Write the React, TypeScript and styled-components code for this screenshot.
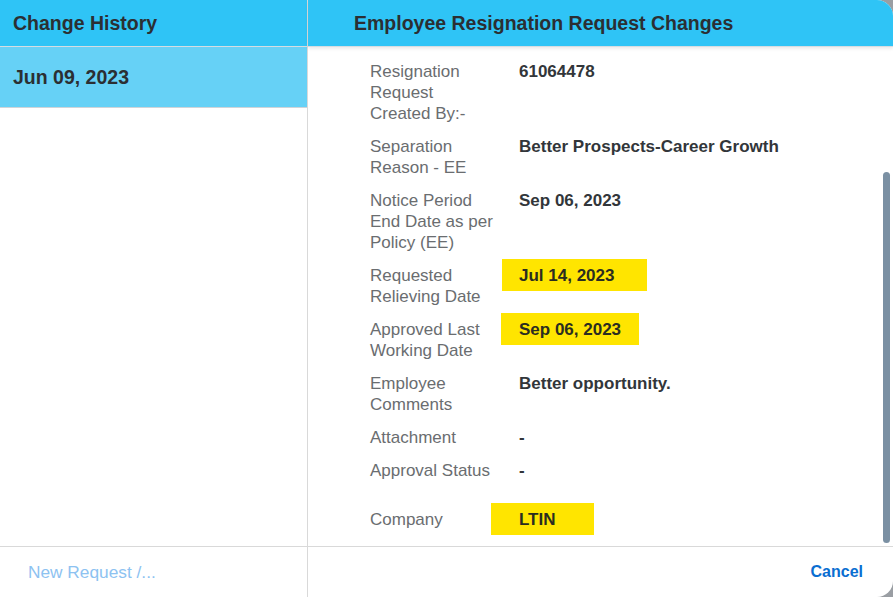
import React from 'react';
import styled, { createGlobalStyle } from 'styled-components';

const GlobalStyle = createGlobalStyle`
    html, body {
        margin: 0;
        padding: 0;
        background: #9a9ea3;
    }
    * {
        box-sizing: border-box;
    }
`;

const Dialog = styled.div`
    display: flex;
    width: 893px;
    height: 597px;
    background: #ffffff;
    border-radius: 0 16px 16px 0;
    overflow: hidden;
    font-family: 'Liberation Sans', Arial, sans-serif;
    color: #32363a;
`;

const LeftPane = styled.div`
    display: flex;
    flex-direction: column;
    width: 308px;
    border-right: 1px solid #d9d9d9;
`;

const RightPane = styled.div`
    display: flex;
    flex-direction: column;
    flex: 1;
    min-width: 0;
`;

const Header = styled.div<{ $pad: number; $shadow?: boolean }>`
    display: flex;
    align-items: center;
    height: 47px;
    padding-left: ${(p) => p.$pad}px;
    background: #2fc4f6;
    border-bottom: 1px solid #d6dde2;
    box-shadow: ${(p) => (p.$shadow ? '0 2px 3px rgba(0, 0, 0, 0.08)' : 'none')};
    position: relative;
    z-index: 1;
`;

const HeaderTitle = styled.h1<{ $size: number }>`
    margin: 0;
    font-size: ${(p) => p.$size}px;
    font-weight: 700;
    color: #2b2f33;
`;

const HistoryList = styled.div`
    flex: 1;
`;

const HistoryItem = styled.div<{ $selected?: boolean }>`
    display: flex;
    align-items: center;
    height: 61px;
    padding: 0 0 0 13px;
    background: ${(p) => (p.$selected ? '#66d1f6' : '#ffffff')};
    border-bottom: 1px solid #cfd4d8;
    font-size: 19.5px;
    font-weight: 700;
    color: #2b2f33;
`;

const Footer = styled.div<{ $align: 'start' | 'end' }>`
    display: flex;
    align-items: center;
    justify-content: ${(p) => (p.$align === 'end' ? 'flex-end' : 'flex-start')};
    height: 51px;
    padding: 0 30px 0 28px;
    border-top: 1px solid #d9d9d9;
`;

const FooterButton = styled.button<{ $disabled?: boolean }>`
    border: none;
    background: none;
    padding: 0;
    font-family: inherit;
    font-size: ${(p) => (p.$disabled ? 17.3 : 16)}px;
    font-weight: ${(p) => (p.$disabled ? 400 : 700)};
    color: ${(p) => (p.$disabled ? '#8dc2f1' : '#0a6ed1')};
    cursor: ${(p) => (p.$disabled ? 'default' : 'pointer')};
`;

const Body = styled.div`
    display: flex;
    flex: 1;
    min-height: 0;
    overflow: hidden;
`;

const Content = styled.div`
    display: flex;
    flex-direction: column;
    gap: 12px;
    flex: 1;
    padding: 14px 0 0 62px;
`;

const Row = styled.div<{ $extraTop?: number }>`
    display: grid;
    grid-template-columns: 126px 1fr;
    column-gap: 23px;
    margin-top: ${(p) => p.$extraTop ?? 0}px;
    font-size: 17px;
    line-height: 21px;
`;

const Label = styled.div`
    color: #6a6d70;
`;

const Value = styled.div`
    font-weight: 700;
    color: #32363a;
`;

const Highlight = styled.span<{ $shift: number; $width: number }>`
    display: inline-block;
    width: ${(p) => p.$width}px;
    margin: -6px 0 -5px -${(p) => p.$shift}px;
    padding: 6px 0 5px ${(p) => p.$shift}px;
    background: #ffe500;
    color: #2b2d20;
`;

const ScrollTrack = styled.div`
    display: flex;
    width: 14px;
    padding: 125px 3px 3px 4px;
`;

const ScrollThumb = styled.div`
    flex: 1;
    border-radius: 5px;
    background: #7b90a3;
`;

type Field = {
    label: string;
    value: string;
    highlight?: { shift: number; width: number };
    extraTop?: number;
};

const fields: Field[] = [
    { label: 'Resignation Request Created By:-', value: '61064478' },
    { label: 'Separation Reason - EE', value: 'Better Prospects-Career Growth' },
    { label: 'Notice Period End Date as per Policy (EE)', value: 'Sep 06, 2023' },
    { label: 'Requested Relieving Date', value: 'Jul 14, 2023', highlight: { shift: 17, width: 145 } },
    { label: 'Approved Last Working Date', value: 'Sep 06, 2023', highlight: { shift: 18, width: 138 } },
    { label: 'Employee Comments', value: 'Better opportunity.' },
    { label: 'Attachment', value: '-' },
    { label: 'Approval Status', value: '-' },
    { label: 'Company', value: 'LTIN', highlight: { shift: 28, width: 103 }, extraTop: 16 },
];

const App: React.FC = () => {
    return (
        <>
            <GlobalStyle />
            <Dialog>
                <LeftPane>
                    <Header $pad={13}>
                        <HeaderTitle $size={19.5}>Change History</HeaderTitle>
                    </Header>
                    <HistoryList>
                        <HistoryItem $selected>Jun 09, 2023</HistoryItem>
                    </HistoryList>
                    <Footer $align="start">
                        <FooterButton $disabled>New Request /...</FooterButton>
                    </Footer>
                </LeftPane>
                <RightPane>
                    <Header $pad={46} $shadow>
                        <HeaderTitle $size={19.5}>Employee Resignation Request Changes</HeaderTitle>
                    </Header>
                    <Body>
                        <Content>
                            {fields.map((field) => (
                                <Row key={field.label} $extraTop={field.extraTop}>
                                    <Label>{field.label}</Label>
                                    <Value>
                                        {field.highlight ? (
                                            <Highlight $shift={field.highlight.shift} $width={field.highlight.width}>
                                                {field.value}
                                            </Highlight>
                                        ) : (
                                            field.value
                                        )}
                                    </Value>
                                </Row>
                            ))}
                        </Content>
                        <ScrollTrack>
                            <ScrollThumb />
                        </ScrollTrack>
                    </Body>
                    <Footer $align="end">
                        <FooterButton>Cancel</FooterButton>
                    </Footer>
                </RightPane>
            </Dialog>
        </>
    );
};

export default App;
